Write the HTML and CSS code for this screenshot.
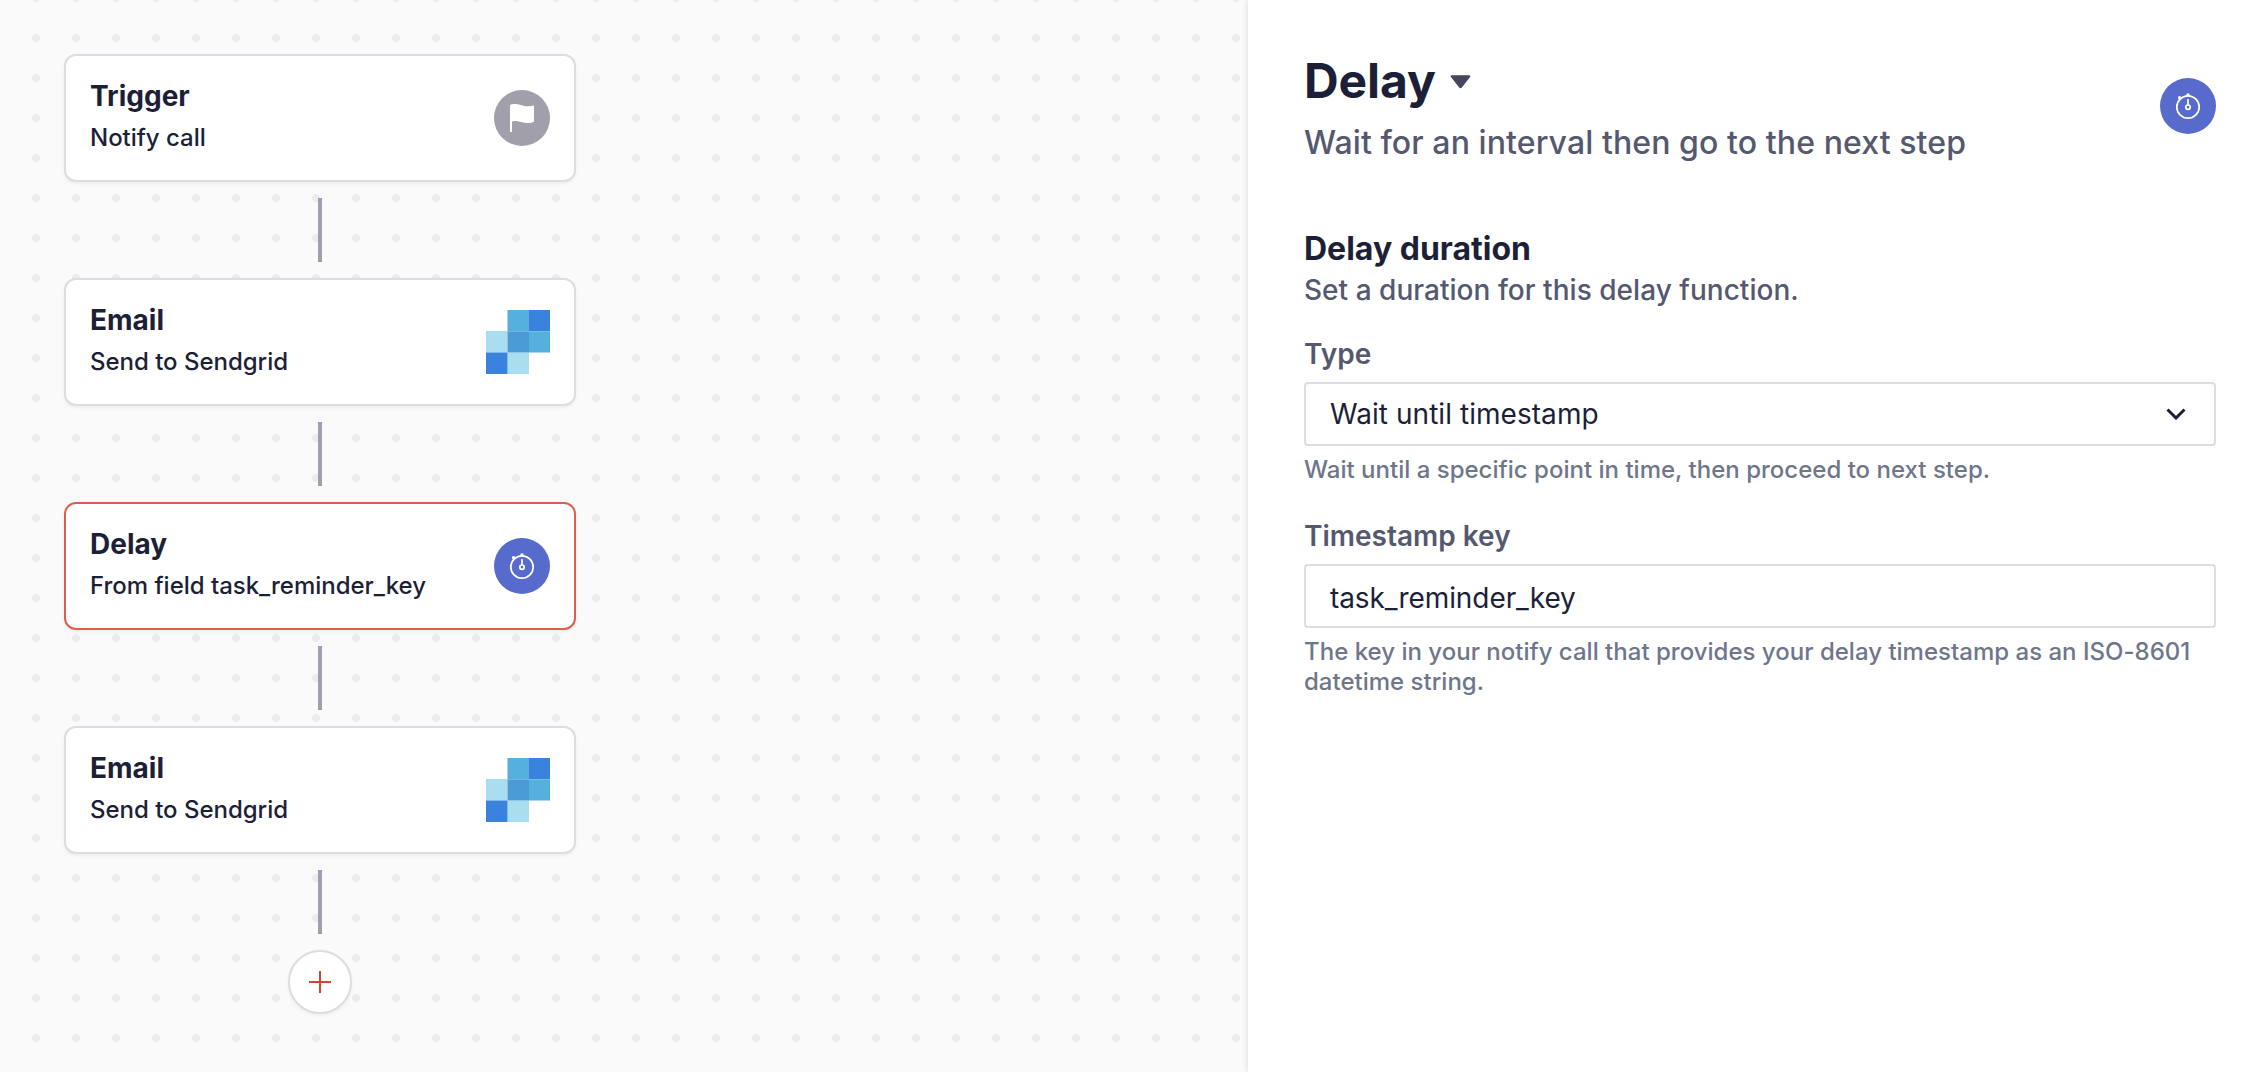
FILE: index.html
```html
<!DOCTYPE html>
<html lang="en">
<head>
<meta charset="utf-8">
<title>Workflow editor</title>
<link rel="stylesheet" href="styles.css">
</head>
<body>
<svg class="symbols" aria-hidden="true">
  <symbol id="timer" viewBox="0 0 56 56">
    <g fill="none" stroke="#fff" stroke-width="1.7" stroke-linecap="round">
      <circle cx="28" cy="29" r="11.2"/>
      <circle cx="28" cy="29.2" r="2.2"/>
      <path d="M28 26.5v-5M28 17.5v-1M20.6 20.6l-1.2-1.2"/>
    </g>
    <circle cx="28" cy="16.9" r="1.7" fill="#fff"/>
    <circle cx="19.6" cy="19.8" r="1.7" fill="#fff"/>
  </symbol>
  <symbol id="sendgrid" viewBox="0 0 64 64">
    <path fill="#a9def1" d="M0 21h21.5v21.500H0zM21.500 42.500H43V64H21.500z"/>
    <path fill="#3b82dc" d="M0 42.500h21.500V64H0zM43 0h21v21.300H43z"/>
    <path fill="#56b0dd" d="M21.500 0H43v21.300H21.500zM43 21.300h21v21.200H43z"/>
    <path fill="#4b9bd5" d="M21.500 21.300H43v21.200H21.500z"/>
  </symbol>
</svg>
<div class="app">
  <main class="canvas">
    <section class="card">
      <div class="card-text"><h3>Trigger</h3><p>Notify call</p></div>
      <span class="badge badge-gray"><svg viewBox="0 0 56 56"><path fill="#fff" d="M16 15.300Q17 14 20 14C26 14 29 16.300 34 16.300Q37.500 16.300 40 15.500V31.500Q38 33 34.500 33C28.500 33 25 31 20.500 31Q19 31 18 31.400V42H16z"/></svg></span>
    </section>
    <div class="connector"></div>
    <section class="card">
      <div class="card-text"><h3>Email</h3><p>Send to Sendgrid</p></div>
      <svg class="logo"><use href="#sendgrid"/></svg>
    </section>
    <div class="connector"></div>
    <section class="card card-active">
      <div class="card-text"><h3>Delay</h3><p>From field task_reminder_key</p></div>
      <span class="badge"><svg><use href="#timer"/></svg></span>
    </section>
    <div class="connector"></div>
    <section class="card">
      <div class="card-text"><h3>Email</h3><p>Send to Sendgrid</p></div>
      <svg class="logo"><use href="#sendgrid"/></svg>
    </section>
    <div class="connector"></div>
    <button class="add" aria-label="Add step"><svg viewBox="0 0 24 24"><path d="M12 1v22M1 12h22" stroke="#d2452c" stroke-width="2"/></svg></button>
  </main>
  <aside class="panel">
    <header class="panel-head">
      <div>
        <h1><span>Delay</span><svg viewBox="0 0 22 14"><path fill="#43465c" d="M2 0h18q2 0 1 1.800l-8.600 11q-1.400 1.700-2.800 0L1 1.800Q0 0 2 0z"/></svg></h1>
        <p class="subtitle">Wait for an interval then go to the next step</p>
      </div>
      <span class="badge"><svg><use href="#timer"/></svg></span>
    </header>
    <h2>Delay duration</h2>
    <p class="lead">Set a duration for this delay function.</p>
    <div class="group">
      <div class="label">Type</div>
      <div class="field"><span>Wait until timestamp</span><svg viewBox="0 0 20 12"><path d="M1.500 1.500L10 10l8.500-8.500" fill="none" stroke="#1c1f37" stroke-width="3"/></svg></div>
      <p class="help">Wait until a specific point in time, then proceed to next step.</p>
    </div>
    <div class="group">
      <div class="label">Timestamp key</div>
      <div class="field field-input"><span>task_reminder_key</span></div>
      <p class="help">The key in your notify call that provides your delay timestamp as an ISO-8601 datetime string.</p>
    </div>
  </aside>
</div>
</body>
</html>
```
FILE: styles.css
```css
* { box-sizing: border-box; margin: 0; padding: 0; }
body { font-family: Inter, "Liberation Sans", sans-serif; color: #1c1f37; background: #fff; }
.symbols { display: none; }
.app { display: flex; width: 2260px; height: 1072px; overflow: hidden; }
.canvas {
  width: 1248px;
  padding: 54px 64px;
  display: flex;
  flex-direction: column;
  align-items: flex-start;
  gap: 16px;
  background: #fafafa radial-gradient(circle at 20px 20px, #ececec 3.700px, transparent 4.300px) 16px 18px / 40px 40px;
}
.card {
  display: flex;
  justify-content: space-between;
  align-items: center;
  width: 512px;
  height: 128px;
  padding: 0 24px;
  border: 2px solid #dcdce2;
  border-radius: 12px;
  background: #fff;
  box-shadow: 0 2px 4px rgba(0, 0, 0, .05);
}
.card-active { border-color: #dd5e4b; }
.card h3 { font-size: 28px; font-weight: 700; line-height: 40px; }
.card p { font-size: 24px; font-weight: 500; line-height: 44px; letter-spacing: -.02px; }
.badge { flex: none; width: 56px; height: 56px; border-radius: 50%; background: #566bcb; }
.badge-gray { background: #a09faa; }
.badge svg { display: block; width: 56px; height: 56px; }
.logo { width: 64px; height: 64px; }
.connector { width: 4px; height: 64px; margin-left: 254px; background: #a09faa; }
.add {
  display: grid;
  place-items: center;
  width: 64px;
  height: 64px;
  margin-left: 224px;
  border: 2px solid #dcdce2;
  border-radius: 50%;
  background: #fff;
  box-shadow: 0 2px 4px rgba(0, 0, 0, .05);
}
.add svg { width: 24px; height: 24px; }
.panel {
  flex: 1;
  padding: 50px 44px 0 56px;
  background: #fff;
  box-shadow: 0 0 6px rgba(0, 0, 0, .14);
}
.panel-head { display: flex; justify-content: space-between; align-items: flex-start; }
.panel-head .badge { margin-top: 28px; }
h1 { display: flex; align-items: center; gap: 14px; font-size: 48px; font-weight: 700; line-height: 62px; letter-spacing: -.1px; }
h1 svg { width: 21px; height: 14px; margin-top: 2px; }
.subtitle { font-size: 32px; font-weight: 500; line-height: 62px; letter-spacing: .09px; color: #555970; }
h2 { margin-top: 55px; font-size: 32px; font-weight: 700; line-height: 40px; }
.lead { font-size: 28px; font-weight: 500; line-height: 43px; letter-spacing: .03px; color: #555970; }
.group { margin-top: 22px; }
.group + .group { margin-top: 31px; }
.label { font-size: 28px; font-weight: 600; line-height: 40px; color: #555970; }
.field {
  display: flex;
  justify-content: space-between;
  align-items: center;
  height: 64px;
  margin-top: 8px;
  padding: 0 28px 0 24px;
  border: 2px solid #dcdce2;
  border-radius: 4px;
  font-size: 28px;
}
.field span { letter-spacing: .05px; }
.field-input { padding-top: 4px; }
.field-input span { letter-spacing: -.08px; }
.field svg { width: 20px; height: 12px; }
.help { margin-top: 9px; font-size: 24px; font-weight: 500; line-height: 30px; letter-spacing: .01px; color: #6f768b; }
```
